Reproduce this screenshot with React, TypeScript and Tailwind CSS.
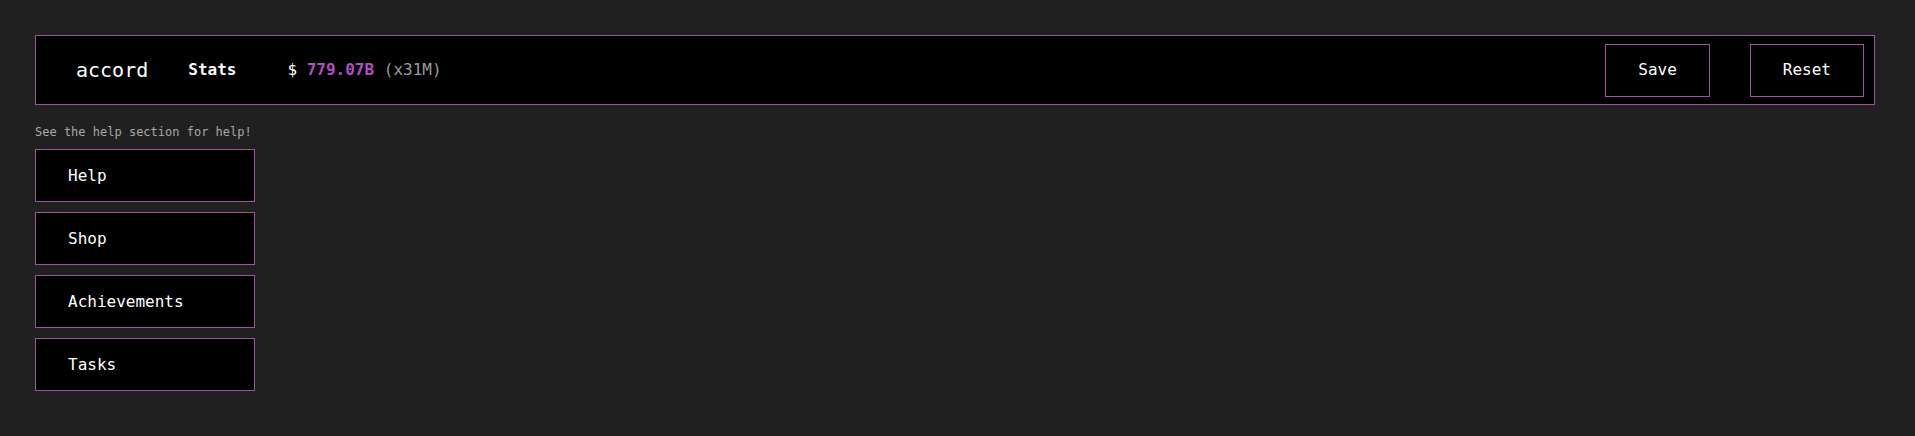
const mono = "font-['DejaVu_Sans_Mono','Liberation_Mono',monospace]"

const navItems = ['Help', 'Shop', 'Achievements', 'Tasks']

function HeaderButton({ label }: { label: string }) {
  return (
    <button className="h-[53px] border border-[#9a559e] bg-black px-8 text-base text-white">
      {label}
    </button>
  )
}

export default function App() {
  return (
    <div className={`min-h-[436px] w-full bg-[#202020] pt-[35px] ${mono}`}>
      <header className="ml-[35px] flex h-[70px] w-[1840px] items-center border border-[#9a559e] bg-black pl-10 pr-[10px]">
        <span className="text-[20px] text-white">accord</span>
        <span className="ml-10 text-base font-bold text-white">Stats</span>
        <span className="ml-[51px] text-base text-white">
          ${' '}
          <span className="font-bold text-[#b24fc4]">779.07B</span>{' '}
          <span className="text-[#9a9a9a]">(x31M)</span>
        </span>
        <div className="ml-auto flex gap-10">
          <HeaderButton label="Save" />
          <HeaderButton label="Reset" />
        </div>
      </header>

      <div className="ml-[35px] mt-[20px] flex flex-col">
        <p className="text-xs leading-[15px] text-[#a8a8a8]">See the help section for help!</p>
        <nav className="mt-[9px] flex flex-col gap-[10px]">
          {navItems.map((item) => (
            <button
              key={item}
              className="flex h-[53px] w-[220px] items-center border border-[#9a559e] bg-black px-8 text-base text-white"
            >
              {item}
            </button>
          ))}
        </nav>
      </div>
    </div>
  )
}
